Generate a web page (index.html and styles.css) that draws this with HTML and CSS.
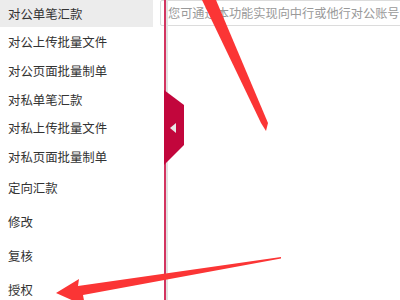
FILE: index.html
```html
<!DOCTYPE html>
<html>
<head>
<meta charset="utf-8">
<link rel="stylesheet" href="styles.css">
</head>
<body>
<div class="page">
  <nav class="sidebar">
    <ul class="group group-main">
      <li class="item active">对公单笔汇款</li>
      <li class="item">对公上传批量文件</li>
      <li class="item">对公页面批量制单</li>
      <li class="item">对私单笔汇款</li>
      <li class="item">对私上传批量文件</li>
      <li class="item">对私页面批量制单</li>
    </ul>
    <ul class="group group-ops">
      <li class="item">定向汇款</li>
      <li class="item">修改</li>
      <li class="item">复核</li>
      <li class="item">授权</li>
    </ul>
  </nav>
  <main class="content">
    <div class="divider">
      <div class="toggle">
        <svg width="20" height="75" viewBox="0 0 20 75"><polygon points="0,0 20,15 20,55 0,75" fill="#c2063c"/><polygon points="6,38 12,33 12,43" fill="#e8e8e8"/></svg>
      </div>
    </div>
    <div class="search">
      <input class="search-input" type="text" placeholder="您可通过本功能实现向中行或他行对公账号汇款">
    </div>
  </main>
  <svg class="marks" width="400" height="300" viewBox="0 0 400 300">
    <path d="M202,0 L216,0 L268,123 L266,131 L261,123 Z" fill="#fb3535"/>
    <path d="M56,293 L79,279 L78,286 L281,257 L281,258.5 L83,295 L85,306 Z" fill="#fb3535"/>
  </svg>
</div>
</body>
</html>
```
FILE: styles.css
```css
html, body {
  margin: 0;
  padding: 0;
  background: #fff;
}
.page {
  position: relative;
  width: 400px;
  height: 300px;
  overflow: hidden;
  display: flex;
  font-family: "Noto Sans CJK SC", "Noto Sans", sans-serif;
}
.sidebar {
  width: 160px;
  flex: none;
}
.group {
  list-style: none;
  margin: 0;
  padding: 0;
  display: flex;
  flex-direction: column;
}
.group-main {
  gap: 1.7px;
}
.item {
  width: 153px;
  box-sizing: border-box;
  padding-left: 8px;
  font-size: 12.4px;
  color: #333;
  display: flex;
  align-items: center;
}
.group-main .item {
  height: 27px;
}
.group-ops {
  margin-top: 0.5px;
}
.group-ops .item {
  height: 34px;
}
.item.active {
  background: #ececec;
}
.content {
  flex: 1;
  position: relative;
}
.divider {
  position: absolute;
  left: 4px;
  top: 0;
  bottom: 0;
  width: 2px;
  background: #d23460;
  box-shadow: 2px 0 0 #e2e2e2;
  z-index: 2;
}
.toggle {
  position: absolute;
  left: 0;
  top: 90px;
  width: 20px;
  height: 75px;
}
.toggle svg {
  display: block;
}
.search {
  margin-top: -1px;
}
.search-input {
  box-sizing: border-box;
  width: 260px;
  height: 26px;
  border: 1px solid #dcdcdc;
  border-radius: 2px;
  padding: 0 0 0 7px;
  font-family: "Noto Sans CJK SC", "Noto Sans", sans-serif;
  font-size: 12.2px;
  color: #999;
  outline: none;
  background: #fff;
}
.search-input::placeholder {
  color: #999;
}
.marks {
  position: absolute;
  left: 0;
  top: 0;
  pointer-events: none;
  z-index: 5;
}
```
